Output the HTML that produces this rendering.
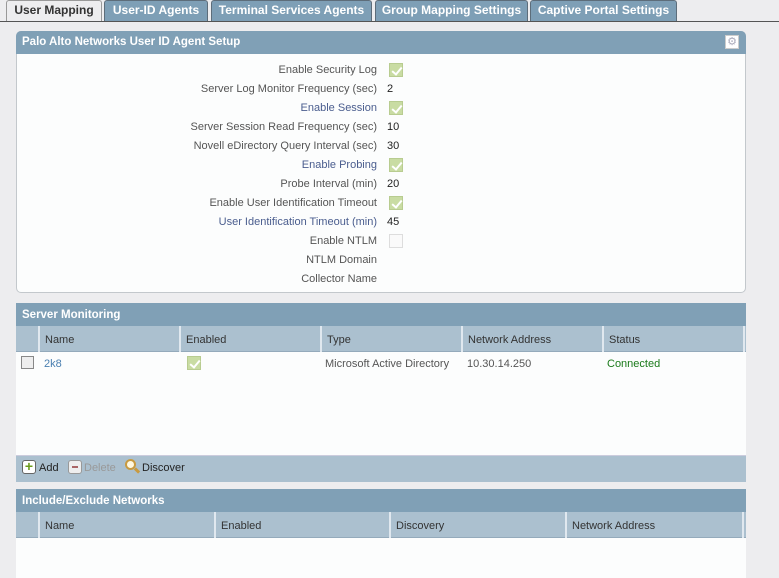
<!DOCTYPE html>
<html><head><style>
*{margin:0;padding:0;box-sizing:border-box}
body{width:779px;height:578px;background:#ededef;font-family:"Liberation Sans",sans-serif;font-size:11px;color:#444;position:relative;overflow:hidden}
.a{position:absolute}
.tab{position:absolute;top:0;height:21px;background:#7e9fb6;color:#fff;font-weight:bold;font-size:12px;line-height:19px;text-align:center;border:1px solid #5d6d7a;border-bottom:none;border-radius:3px 3px 0 0}
.hdr{position:absolute;left:16px;width:730px;background:#80a0b6;color:#fff;font-weight:bold;font-size:11.5px;padding-left:6px}
.ch{position:absolute;height:26px;background:#abc0cf;border-bottom:1px solid #94aabb}
.ch div{position:absolute;top:0;height:26px;border-left:2px solid #e0e8ef;line-height:28px;padding-left:5px;color:#333}
.lbl{position:absolute;right:402px;width:300px;text-align:right;color:#555}
.val{position:absolute;left:387px;color:#222}
.cb{position:absolute;left:389px;width:14px;height:14px;background:#c9dca3;border:1px solid #b8cc90}
.cb::after{content:"";position:absolute;left:4px;top:1px;width:4px;height:8px;border:solid #fff;border-width:0 2px 2px 0;transform:rotate(40deg)}
</style></head><body>
<div class="a" style="left:0;top:21px;width:779px;height:1px;background:#555"></div>
<div class="tab" style="left:6px;width:96px;background:#ededef;color:#333;border-color:#999">User Mapping</div>
<div class="tab" style="left:104px;width:104px">User-ID Agents</div>
<div class="tab" style="left:211px;width:161px">Terminal Services Agents</div>
<div class="tab" style="left:375px;width:153px">Group Mapping Settings</div>
<div class="tab" style="left:530px;width:147px">Captive Portal Settings</div>

<div class="a" style="left:16px;top:31px;width:730px;height:262px;background:#fcfdfd;border:1px solid #c3c8cc;border-radius:5px"></div>
<div class="hdr" style="top:31px;height:23px;line-height:23px;border-radius:5px 5px 0 0">Palo Alto Networks User ID Agent Setup</div>
<div class="a" style="left:725px;top:35px;width:14px;height:14px;background:#fff;border:1px solid #ccc;color:#aab;font-size:11px;line-height:12px;text-align:center">⚙</div>

<div class="lbl" style="top:64px">Enable Security Log</div><div class="cb" style="top:63px"></div>
<div class="lbl" style="top:83px">Server Log Monitor Frequency (sec)</div><div class="val" style="top:83px">2</div>
<div class="lbl" style="top:102px;color:#4a5d8e">Enable Session</div><div class="cb" style="top:101px"></div>
<div class="lbl" style="top:121px">Server Session Read Frequency (sec)</div><div class="val" style="top:121px">10</div>
<div class="lbl" style="top:140px">Novell eDirectory Query Interval (sec)</div><div class="val" style="top:140px">30</div>
<div class="lbl" style="top:159px;color:#4a5d8e">Enable Probing</div><div class="cb" style="top:158px"></div>
<div class="lbl" style="top:178px">Probe Interval (min)</div><div class="val" style="top:178px">20</div>
<div class="lbl" style="top:197px">Enable User Identification Timeout</div><div class="cb" style="top:196px"></div>
<div class="lbl" style="top:216px;color:#4a5d8e">User Identification Timeout (min)</div><div class="val" style="top:216px">45</div>
<div class="lbl" style="top:235px">Enable NTLM</div><div class="a" style="left:389px;top:234px;width:14px;height:14px;border:1px solid #ddd;background:#fafafa"></div>
<div class="lbl" style="top:254px">NTLM Domain</div>
<div class="lbl" style="top:273px">Collector Name</div>

<div class="hdr" style="top:303px;height:24px;line-height:24px">Server Monitoring</div>
<div class="a" style="left:16px;top:326px;width:730px;height:156px;background:#fcfdfd"></div>
<div class="ch" style="left:16px;top:326px;width:730px">
<div style="left:22px;width:141px">Name</div><div style="left:163px;width:141px">Enabled</div><div style="left:304px;width:141px">Type</div><div style="left:445px;width:141px">Network Address</div><div style="left:586px;width:141px">Status</div><div style="left:727px;width:3px"></div></div>
<div class="a" style="left:21px;top:356px;width:13px;height:13px;border:1px solid #888;background:#eee"></div>
<div class="a" style="left:44px;top:358px;color:#4a7fb0">2k8</div>
<div class="a" style="left:187px;top:356px;width:14px;height:14px;background:#c9dca3"><div class="cb" style="left:0;top:0"></div></div>
<div class="a" style="left:325px;top:358px;color:#555">Microsoft Active Directory</div>
<div class="a" style="left:467px;top:358px;color:#555">10.30.14.250</div>
<div class="a" style="left:607px;top:358px;color:#1a7a1a">Connected</div>
<div class="a" style="left:16px;top:455px;width:730px;height:27px;background:#abc0cf;border-top:1px solid #ccd"></div>
<div class="a" style="left:22px;top:460px;width:14px;height:14px;border:1px solid #666;border-radius:3px;background:#fff;color:#6a9a1a;font-weight:bold;font-size:14px;line-height:11px;text-align:center">+</div>
<div class="a" style="left:39px;top:462px;color:#222">Add</div>
<div class="a" style="left:68px;top:460px;width:14px;height:14px;border:1px solid #999;border-radius:3px;background:#eee"><div class="a" style="left:3px;top:5px;width:6px;height:2px;background:#a66"></div></div>
<div class="a" style="left:84px;top:462px;color:#999">Delete</div>
<div class="a" style="left:125px;top:459px;width:11px;height:11px;border:2px solid #c89a40;border-radius:50%;background:#fff8e0"></div>
<div class="a" style="left:134px;top:469px;width:6px;height:3px;background:#c89a40;transform:rotate(45deg)"></div>
<div class="a" style="left:142px;top:462px;color:#222">Discover</div>

<div class="hdr" style="top:489px;height:24px;line-height:24px">Include/Exclude Networks</div>
<div class="a" style="left:16px;top:512px;width:730px;height:66px;background:#fcfdfd"></div>
<div class="ch" style="left:16px;top:512px;width:730px">
<div style="left:22px;width:176px">Name</div><div style="left:198px;width:175px">Enabled</div><div style="left:373px;width:176px">Discovery</div><div style="left:549px;width:177px">Network Address</div><div style="left:726px;width:4px"></div></div>
</body></html>
